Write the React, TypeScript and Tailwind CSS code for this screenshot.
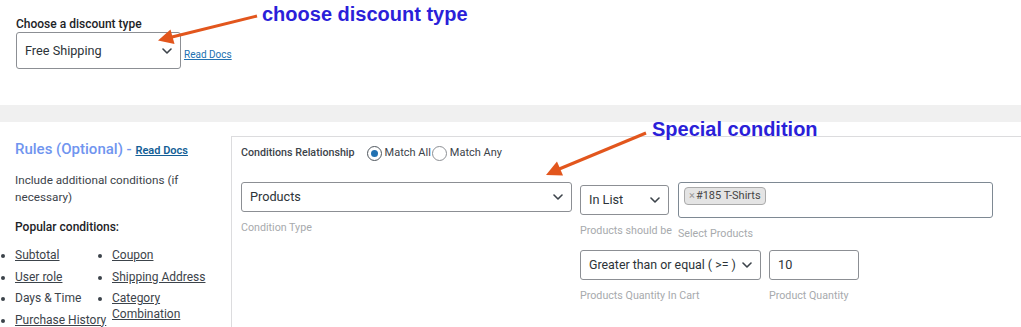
import React from "react";

const Chevron = ({ className = "" }: { className?: string }) => (
  <svg width="10" height="6" viewBox="0 0 10 6" className={className} fill="none">
    <path d="M1 1l4 4 4-4" stroke="#3c434a" strokeWidth="1.6" strokeLinecap="round" strokeLinejoin="round" />
  </svg>
);

const Select = ({ label, className }: { label: string; className: string }) => (
  <div className={`flex items-center justify-between border border-[#8c8f94] rounded-[3px] bg-white pl-[8px] pr-[8px] text-[#2c3338] ${className}`}>
    <span className="whitespace-nowrap">{label}</span>
    <Chevron />
  </div>
);

const Radio = ({ checked, label }: { checked?: boolean; label: string }) => (
  <div className="flex items-center">
    <span className={`w-[15px] h-[15px] rounded-full border ${checked ? "border-[#50575e]" : "border-[#8c8f94]"} flex items-center justify-center bg-white`}>
      {checked && <span className="w-[7px] h-[7px] rounded-full bg-[#2271b1]" />}
    </span>
    <span className="ml-[3px] text-[11px] text-[#3c434a]">{label}</span>
  </div>
);

const Hint = ({ children }: { children: React.ReactNode }) => (
  <div className="mt-[8px] pt-[1px] text-[10.7px] leading-[14px] text-[#a7aaad] whitespace-nowrap">{children}</div>
);

export default function App() {
  return (
    <div className="relative w-[1021px] h-[327px] overflow-hidden bg-white font-['Roboto',sans-serif]">
      {/* top section */}
      <div className="h-[105px] pt-[17px] pl-[16px]">
        <div className="text-[12px] leading-[14px] font-medium text-[#1d2327]">Choose a discount type</div>
        <div className="mt-[1px] flex items-center">
          <Select label="Free Shipping" className="w-[165px] h-[37px] text-[12.7px]" />
          <a className="ml-[3px] pt-[7px] text-[10px] text-[#2271b1] underline">Read Docs</a>
        </div>
      </div>
      <div className="h-[17px] bg-[#f0f0f0]" />

      {/* bottom */}
      <div className="flex">
        <div className="w-[231px] shrink-0 pl-[15px] pr-[10px] pt-[17px]">
          <div className="text-[15px] leading-[20px] font-medium text-[#7095ef] whitespace-nowrap">
            Rules (Optional) - <a className="text-[11px] font-semibold text-[#135e96] underline">Read Docs</a>
          </div>
          <p className="mt-[11px] w-[190px] text-[11.7px] leading-[17px] text-[#3c434a]">
            Include additional conditions (if necessary)
          </p>
          <p className="mt-[13px] text-[12px] leading-[17px] font-medium text-[#1d2327]">Popular conditions:</p>
          <div className="mt-[11px] flex text-[12px] leading-[16px] text-[#3c434a]">
            <ul className="list-disc list-outside w-[85px] shrink-0 whitespace-nowrap">
              <li className="mb-[5.5px]"><span className="underline">Subtotal</span></li>
              <li className="mb-[5.5px]"><span className="underline">User role</span></li>
              <li className="mb-[5.5px]">Days &amp; Time</li>
              <li className="mt-[0.5px]"><span className="underline">Purchase History</span></li>
            </ul>
            <ul className="list-disc list-outside ml-[12px] w-[105px]">
              <li className="mb-[5.5px]"><span className="underline">Coupon</span></li>
              <li className="mb-[5.5px] whitespace-nowrap"><span className="underline">Shipping Address</span></li>
              <li><span className="underline">Category Combination</span></li>
            </ul>
          </div>
        </div>

        <div className="mt-[14px] flex-1 h-[200px] border-l border-t border-[#dcdcde] pl-[9px] pt-[8px]">
          <div className="flex items-center h-[16px]">
            <span className="text-[10.7px] font-medium text-[#3c434a] whitespace-nowrap">Conditions Relationship</span>
            <div className="ml-[12px] flex items-center gap-[1px]">
              <Radio checked label="Match All" />
              <Radio label="Match Any" />
            </div>
          </div>

          <div className="mt-[21px] flex items-start">
            <div className="w-[331px] shrink-0">
              <Select label="Products" className="w-[331px] h-[30px] text-[12.7px]" />
              <Hint>Condition Type</Hint>
            </div>
            <div className="ml-[8px] flex flex-col">
              <div className="flex items-start">
                <div className="mt-[3px] w-[89px]">
                  <Select label="In List" className="w-[89px] h-[30px] text-[12.7px]" />
                  <Hint>Products should be</Hint>
                </div>
                <div className="ml-[9px]">
                  <div className="w-[315px] h-[36px] border border-[#7e8993] rounded-[3px] pl-[5px] pt-[4px] flex items-start">
                    <span className="flex items-center h-[18px] px-[4px] rounded-[4px] border border-[#aaaaaa] bg-[#e4e4e4] text-[11px] leading-[14px] text-[#444]">
                      <span className="text-[#999] mr-[1px]">×</span>#185 T-Shirts
                    </span>
                  </div>
                  <Hint>Select Products</Hint>
                </div>
              </div>
              <div className="mt-[9px] flex items-start">
                <div>
                  <Select label="Greater than or equal ( >= )" className="w-[181px] h-[30px] text-[12.4px]" />
                  <Hint>Products Quantity In Cart</Hint>
                </div>
                <div className="ml-[8px]">
                  <div className="w-[90px] h-[30px] border border-[#8c8f94] rounded-[3px] pl-[8px] flex items-center text-[12.7px] text-[#2c3338]">10</div>
                  <Hint>Product Quantity</Hint>
                </div>
              </div>
            </div>
          </div>
        </div>
      </div>

      {/* annotations */}
      <div className="absolute left-[262px] top-[2px] text-[20px] leading-[24px] font-bold text-[#2b1fd9] font-['Liberation_Sans',Arial,sans-serif] whitespace-nowrap">
        choose discount type
      </div>
      <div className="absolute left-[652px] top-[117px] text-[20px] leading-[24px] font-bold text-[#2b1fd9] font-['Liberation_Sans',Arial,sans-serif] whitespace-nowrap">
        Special condition
      </div>
      <svg className="absolute left-0 top-0 pointer-events-none" width="1021" height="327">
        <line x1="257" y1="16" x2="170" y2="37.5" stroke="#e2561d" strokeWidth="3" />
        <polygon points="158,40.5 174.5,44 170.5,29.5" fill="#e2561d" />
        <line x1="646" y1="133" x2="558" y2="169.5" stroke="#e2561d" strokeWidth="3" />
        <polygon points="546,175 563,175.5 557,161.5" fill="#e2561d" />
      </svg>
    </div>
  );
}
